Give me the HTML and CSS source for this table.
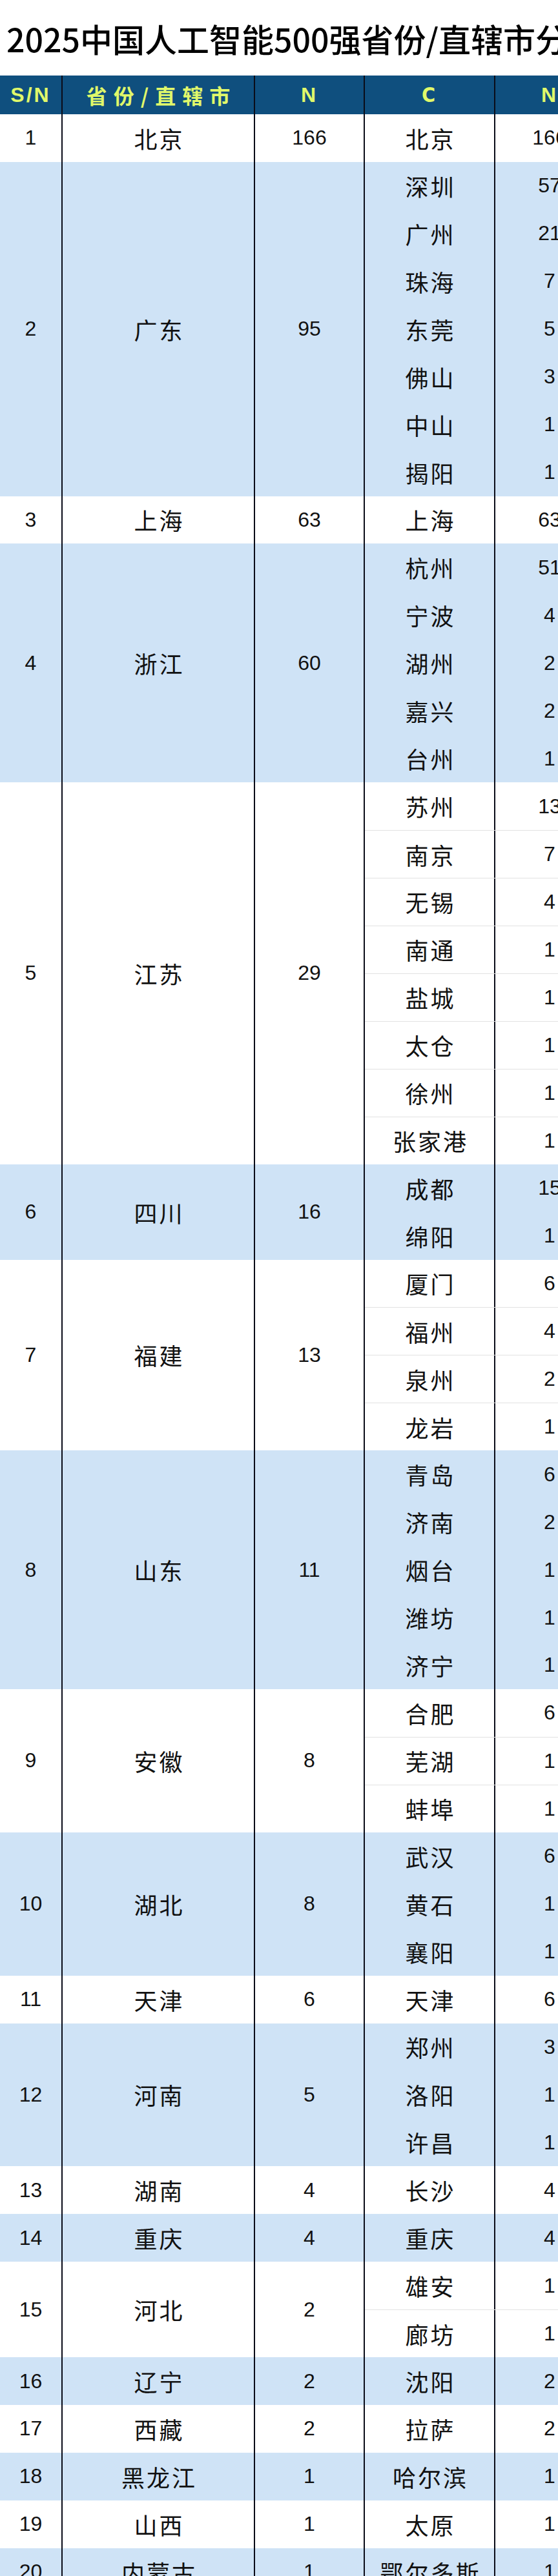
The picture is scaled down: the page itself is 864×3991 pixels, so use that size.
FILE: index.html
```html
<!DOCTYPE html>
<html lang="zh-CN">
<head>
<meta charset="utf-8">
<title>2025中国人工智能500强省份/直辖市分布</title>
<link rel="stylesheet" href="styles.css">
</head>
<body>
<div class="sheet">
  <h1 class="title">2025中国人工智能500强省份/直辖市分布</h1>
  <div class="table">
    <div class="head">
      <div class="hcell sn">S/N</div>
      <div class="hcell prov cjk">省份/直辖市</div>
      <div class="hcell num">N</div>
      <div class="hcell city">C</div>
      <div class="hcell num">N</div>
    </div>

    <div class="group white"><div class="cell sn">1</div><div class="cell prov">北京</div><div class="cell num">166</div>
      <div class="subs"><div class="sub"><div class="c">北京</div><div class="n">166</div></div></div></div>

    <div class="group blue"><div class="cell sn">2</div><div class="cell prov">广东</div><div class="cell num">95</div>
      <div class="subs">
        <div class="sub"><div class="c">深圳</div><div class="n">57</div></div>
        <div class="sub"><div class="c">广州</div><div class="n">21</div></div>
        <div class="sub"><div class="c">珠海</div><div class="n">7</div></div>
        <div class="sub"><div class="c">东莞</div><div class="n">5</div></div>
        <div class="sub"><div class="c">佛山</div><div class="n">3</div></div>
        <div class="sub"><div class="c">中山</div><div class="n">1</div></div>
        <div class="sub"><div class="c">揭阳</div><div class="n">1</div></div>
      </div></div>

    <div class="group white"><div class="cell sn">3</div><div class="cell prov">上海</div><div class="cell num">63</div>
      <div class="subs"><div class="sub"><div class="c">上海</div><div class="n">63</div></div></div></div>

    <div class="group blue"><div class="cell sn">4</div><div class="cell prov">浙江</div><div class="cell num">60</div>
      <div class="subs">
        <div class="sub"><div class="c">杭州</div><div class="n">51</div></div>
        <div class="sub"><div class="c">宁波</div><div class="n">4</div></div>
        <div class="sub"><div class="c">湖州</div><div class="n">2</div></div>
        <div class="sub"><div class="c">嘉兴</div><div class="n">2</div></div>
        <div class="sub"><div class="c">台州</div><div class="n">1</div></div>
      </div></div>

    <div class="group white"><div class="cell sn">5</div><div class="cell prov">江苏</div><div class="cell num">29</div>
      <div class="subs">
        <div class="sub"><div class="c">苏州</div><div class="n">13</div></div>
        <div class="sub"><div class="c">南京</div><div class="n">7</div></div>
        <div class="sub"><div class="c">无锡</div><div class="n">4</div></div>
        <div class="sub"><div class="c">南通</div><div class="n">1</div></div>
        <div class="sub"><div class="c">盐城</div><div class="n">1</div></div>
        <div class="sub"><div class="c">太仓</div><div class="n">1</div></div>
        <div class="sub"><div class="c">徐州</div><div class="n">1</div></div>
        <div class="sub"><div class="c">张家港</div><div class="n">1</div></div>
      </div></div>

    <div class="group blue"><div class="cell sn">6</div><div class="cell prov">四川</div><div class="cell num">16</div>
      <div class="subs">
        <div class="sub"><div class="c">成都</div><div class="n">15</div></div>
        <div class="sub"><div class="c">绵阳</div><div class="n">1</div></div>
      </div></div>

    <div class="group white"><div class="cell sn">7</div><div class="cell prov">福建</div><div class="cell num">13</div>
      <div class="subs">
        <div class="sub"><div class="c">厦门</div><div class="n">6</div></div>
        <div class="sub"><div class="c">福州</div><div class="n">4</div></div>
        <div class="sub"><div class="c">泉州</div><div class="n">2</div></div>
        <div class="sub"><div class="c">龙岩</div><div class="n">1</div></div>
      </div></div>

    <div class="group blue"><div class="cell sn">8</div><div class="cell prov">山东</div><div class="cell num">11</div>
      <div class="subs">
        <div class="sub"><div class="c">青岛</div><div class="n">6</div></div>
        <div class="sub"><div class="c">济南</div><div class="n">2</div></div>
        <div class="sub"><div class="c">烟台</div><div class="n">1</div></div>
        <div class="sub"><div class="c">潍坊</div><div class="n">1</div></div>
        <div class="sub"><div class="c">济宁</div><div class="n">1</div></div>
      </div></div>

    <div class="group white"><div class="cell sn">9</div><div class="cell prov">安徽</div><div class="cell num">8</div>
      <div class="subs">
        <div class="sub"><div class="c">合肥</div><div class="n">6</div></div>
        <div class="sub"><div class="c">芜湖</div><div class="n">1</div></div>
        <div class="sub"><div class="c">蚌埠</div><div class="n">1</div></div>
      </div></div>

    <div class="group blue"><div class="cell sn">10</div><div class="cell prov">湖北</div><div class="cell num">8</div>
      <div class="subs">
        <div class="sub"><div class="c">武汉</div><div class="n">6</div></div>
        <div class="sub"><div class="c">黄石</div><div class="n">1</div></div>
        <div class="sub"><div class="c">襄阳</div><div class="n">1</div></div>
      </div></div>

    <div class="group white"><div class="cell sn">11</div><div class="cell prov">天津</div><div class="cell num">6</div>
      <div class="subs"><div class="sub"><div class="c">天津</div><div class="n">6</div></div></div></div>

    <div class="group blue"><div class="cell sn">12</div><div class="cell prov">河南</div><div class="cell num">5</div>
      <div class="subs">
        <div class="sub"><div class="c">郑州</div><div class="n">3</div></div>
        <div class="sub"><div class="c">洛阳</div><div class="n">1</div></div>
        <div class="sub"><div class="c">许昌</div><div class="n">1</div></div>
      </div></div>

    <div class="group white"><div class="cell sn">13</div><div class="cell prov">湖南</div><div class="cell num">4</div>
      <div class="subs"><div class="sub"><div class="c">长沙</div><div class="n">4</div></div></div></div>

    <div class="group blue"><div class="cell sn">14</div><div class="cell prov">重庆</div><div class="cell num">4</div>
      <div class="subs"><div class="sub"><div class="c">重庆</div><div class="n">4</div></div></div></div>

    <div class="group white"><div class="cell sn">15</div><div class="cell prov">河北</div><div class="cell num">2</div>
      <div class="subs">
        <div class="sub"><div class="c">雄安</div><div class="n">1</div></div>
        <div class="sub"><div class="c">廊坊</div><div class="n">1</div></div>
      </div></div>

    <div class="group blue"><div class="cell sn">16</div><div class="cell prov">辽宁</div><div class="cell num">2</div>
      <div class="subs"><div class="sub"><div class="c">沈阳</div><div class="n">2</div></div></div></div>

    <div class="group white"><div class="cell sn">17</div><div class="cell prov">西藏</div><div class="cell num">2</div>
      <div class="subs"><div class="sub"><div class="c">拉萨</div><div class="n">2</div></div></div></div>

    <div class="group blue"><div class="cell sn">18</div><div class="cell prov">黑龙江</div><div class="cell num">1</div>
      <div class="subs"><div class="sub"><div class="c">哈尔滨</div><div class="n">1</div></div></div></div>

    <div class="group white"><div class="cell sn">19</div><div class="cell prov">山西</div><div class="cell num">1</div>
      <div class="subs"><div class="sub"><div class="c">太原</div><div class="n">1</div></div></div></div>

    <div class="group blue"><div class="cell sn">20</div><div class="cell prov">内蒙古</div><div class="cell num">1</div>
      <div class="subs"><div class="sub"><div class="c">鄂尔多斯</div><div class="n">1</div></div></div></div>
  </div>
</div>
</body>
</html>
```
FILE: styles.css
```css
html, body {
  margin: 0;
  padding: 0;
  overflow: hidden;
  background: #ffffff;
}

.sheet {
  width: 864px;
  overflow: hidden;
  color: #111111;
  font-family: "Noto Sans CJK SC", "Noto Sans", sans-serif;
}

.title {
  margin: 0;
  height: 117px;
  padding-left: 10px;
  display: flex;
  align-items: center;
  white-space: nowrap;
  font-size: 50px;
  font-weight: 500;
  letter-spacing: 0;
  color: #000000;
  line-height: 1;
}

.table {
  width: 935px;
}

.head {
  display: grid;
  grid-template-columns: 95px 298px 170px 202px 170px;
  height: 60px;
  background: #0f4f7e;
}

.hcell {
  display: flex;
  align-items: center;
  justify-content: center;
  color: #e0f86a;
  font-family: "DejaVu Sans Condensed", "Liberation Sans", sans-serif;
  font-weight: bold;
  font-size: 32px;
  letter-spacing: 3px;
  box-sizing: border-box;
}

.hcell + .hcell {
  border-left: 2px solid #0a0c18;
}

.hcell.cjk {
  font-family: "Noto Sans CJK SC", sans-serif;
  font-size: 32px;
  letter-spacing: 10px;
  padding-left: 10px;
}

.group {
  display: grid;
  grid-template-columns: 95px 298px 170px 372px;
}

.group.blue {
  background: #cfe3f6;
}

.group.white {
  background: #ffffff;
}

.cell {
  display: flex;
  align-items: center;
  justify-content: center;
  box-sizing: border-box;
}

.cell + .cell,
.subs {
  border-left: 2px solid #0a0c18;
}

.sn,
.num,
.n {
  font-family: "Liberation Sans", Arial, sans-serif;
  font-size: 32px;
}

.prov,
.c {
  font-size: 36px;
  letter-spacing: 3px;
  padding-left: 3px;
}

.subs {
  box-sizing: border-box;
}

.sub {
  display: grid;
  grid-template-columns: 200px 170px;
  height: 73.95px;
  box-sizing: border-box;
}

.group.white .sub + .sub {
  border-top: 1px solid #e2e2e2;
}

.c,
.n {
  display: flex;
  align-items: center;
  justify-content: center;
  box-sizing: border-box;
}

.n {
  border-left: 2px solid #0a0c18;
}
```
